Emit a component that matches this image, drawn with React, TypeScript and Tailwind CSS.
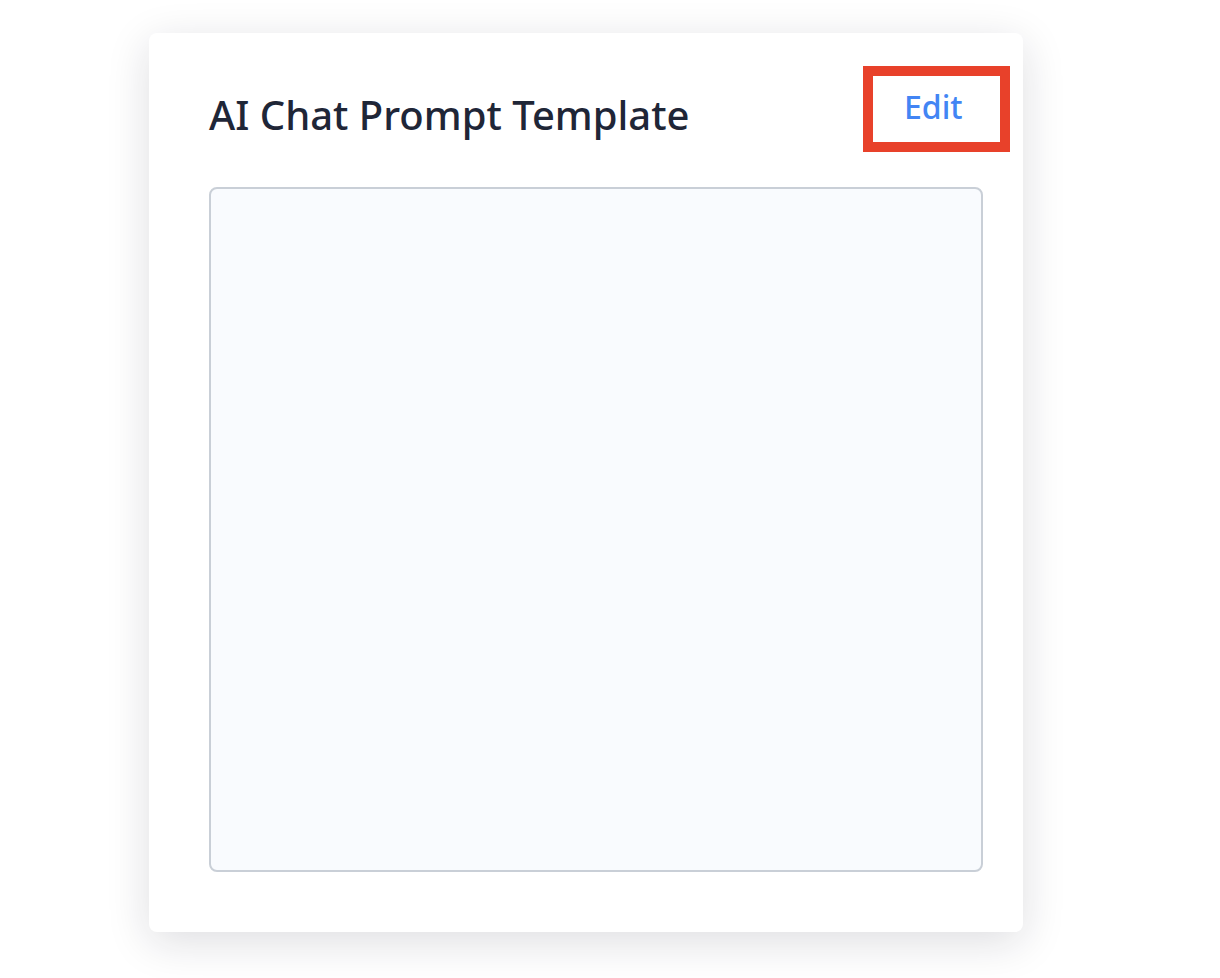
export default function App() {
  return (
    <div className="min-h-screen bg-white pl-[149px] pt-[33px] font-['Noto_Sans',sans-serif]">
      <div className="flex h-[899px] w-[874px] flex-col rounded-[8px] bg-white pl-[60px] pr-[40px] pt-[33px] shadow-[0_10px_44px_rgba(20,20,40,0.14)]">
        {/* Header */}
        <div className="flex items-start justify-between">
          <h2 className="mt-[24px] text-[40px] font-medium leading-[49px] text-[#1f2637]">
            AI Chat Prompt Template
          </h2>
          <button
            type="button"
            className="mr-[-27px] flex h-[86px] w-[147px] items-start border-[10px] border-[#e8412a] pl-[31px] pt-[9px] text-[32px] font-medium leading-[44px] text-[#4285f4]"
          >
            Edit
          </button>
        </div>

        {/* Template body */}
        <textarea
          readOnly
          className="mt-[35px] h-[685px] w-full resize-none rounded-[8px] border-2 border-[#c9cfd7] bg-[#f9fbfe] outline-none"
        />
      </div>
    </div>
  );
}
